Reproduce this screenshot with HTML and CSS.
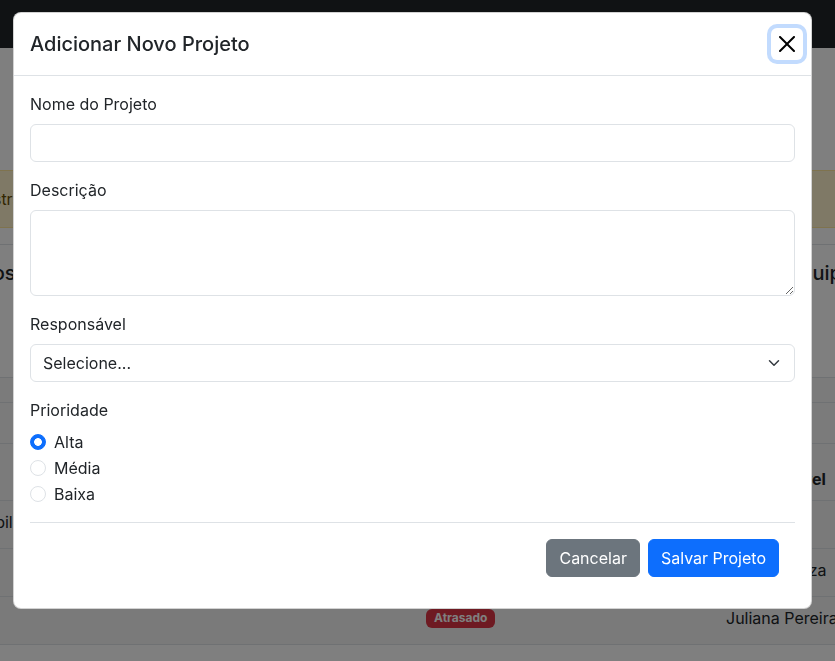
FILE: index.html
```
<!DOCTYPE html>
<html lang="pt-BR">
<head>
<meta charset="utf-8">
<title>Projetos</title>
<link rel="stylesheet" href="styles.css">
</head>
<body>
<header class="navbar"></header>
<main class="page">
  <div class="alert">Demonstração: dados fictícios para teste.</div>
  <div class="heads">
    <h5 class="head">Projetos</h5>
    <h5 class="head">Equipe</h5>
  </div>
  <div class="band band-a"></div>
  <div class="band band-b"></div>
  <div class="trow thead">
    <div>Nome</div><div>Status</div><div>Responsável</div>
  </div>
  <div class="trow">
    <div class="first">App Mobile</div><div><span class="badge ok">Em dia</span></div><div>Ana Lima</div>
  </div>
  <div class="trow">
    <div>ERP</div><div><span class="badge ok">Em dia</span></div><div>Carlos Souza</div>
  </div>
  <div class="trow last">
    <div>CRM</div><div><span class="badge late">Atrasado</span></div><div>Juliana Pereira</div>
  </div>
</main>

<div class="backdrop">
  <div class="modal">
    <div class="modal-header">
      <h5 class="modal-title">Adicionar Novo Projeto</h5>
      <button class="btn-close" type="button" aria-label="Fechar">
        <svg width="16" height="16" viewBox="0 0 16 16"><path fill="#000" d="M.293.293a1 1 0 0 1 1.414 0L8 6.586 14.293.293a1 1 0 1 1 1.414 1.414L9.414 8l6.293 6.293a1 1 0 0 1-1.414 1.414L8 9.414l-6.293 6.293a1 1 0 0 1-1.414-1.414L6.586 8 .293 1.707a1 1 0 0 1 0-1.414"/></svg>
      </button>
    </div>
    <div class="modal-body">
      <form class="form">
        <div class="field">
          <label class="label" for="nome">Nome do Projeto</label>
          <input class="control" id="nome" type="text">
        </div>
        <div class="field">
          <label class="label" for="desc">Descrição</label>
          <textarea class="control area" id="desc" rows="3"></textarea>
        </div>
        <div class="field">
          <label class="label">Responsável</label>
          <div class="control select">
            <span>Selecione...</span>
            <svg width="16" height="12" viewBox="0 0 16 16"><path fill="none" stroke="#343a40" stroke-linecap="round" stroke-linejoin="round" stroke-width="2" d="m2 5 6 6 6-6"/></svg>
          </div>
        </div>
        <div class="field">
          <label class="label">Prioridade</label>
          <div class="check"><input class="radio" type="radio" name="p" id="p1" checked><label for="p1">Alta</label></div>
          <div class="check"><input class="radio" type="radio" name="p" id="p2"><label for="p2">Média</label></div>
          <div class="check"><input class="radio" type="radio" name="p" id="p3"><label for="p3">Baixa</label></div>
        </div>
        <div class="modal-footer">
          <button class="btn btn-secondary" type="button">Cancelar</button>
          <button class="btn btn-primary" type="button">Salvar Projeto</button>
        </div>
      </form>
    </div>
  </div>
</div>
</body>
</html>
```
FILE: styles.css
```
* { box-sizing: border-box; }
html, body { margin: 0; }
body {
  font-family: Inter, "Noto Sans", sans-serif;
  font-size: 16px;
  line-height: 1.5;
  color: #212529;
  background: #fff;
  height: 661px;
  overflow: hidden;
}

/* background page */
.navbar { height: 48px; background: #212529; }
.page { margin: 0 -80px 0 -75px; padding-top: 122px; }
.alert {
  background: #fff3cd;
  border: 1px solid #ffe69c;
  color: #664d03;
  padding: 16px 16px 16px 13px;
  margin-bottom: 16px;
  white-space: nowrap;
}
.heads {
  display: grid;
  grid-template-columns: 851px 1fr;
  border-top: 1px solid #dee2e6;
  height: 133px;
}
.head {
  margin: 0;
  padding: 16px 12px;
  font-size: 20px;
  line-height: 24px;
  font-weight: 500;
  white-space: nowrap;
}
.band { border-top: 1px solid #dee2e6; background: #f6f6f6; }
.band-a { height: 25px; }
.band-b { height: 41px; }
.trow {
  display: grid;
  grid-template-columns: 489px 300px 1fr;
  align-items: start;
  height: 48px;
  padding-top: 9px;
  border-top: 1px solid #dee2e6;
  background: #f4f4f4;
}
.trow > div {
  display: flex;
  align-items: center;
  height: 24px;
  padding: 0 12px;
  white-space: nowrap;
}
.trow > .first { padding-left: 11px; }
.thead { height: 57px; padding-top: 23px; font-weight: 700; background: #f6f6f6; }
.last { height: 49px; border-bottom: 1px solid #dee2e6; }
.badge {
  display: inline-block;
  font-size: 12px;
  font-weight: 700;
  line-height: 1;
  padding: 3.5px 8px;
  border-radius: 6px;
  color: #fff;
}
.late { background: #dc3545; }
.ok { background: #198754; }

/* modal */
.backdrop {
  position: fixed;
  inset: 0;
  background: rgba(0, 0, 0, .5);
  padding: 12px 23px 0 13px;
}
.modal {
  background: #fff;
  border: 1px solid rgba(0, 0, 0, .175);
  border-radius: 8px;
}
.modal-header {
  display: flex;
  align-items: center;
  padding: 16px;
  border-bottom: 1px solid #dee2e6;
}
.modal-title {
  margin: 0;
  font-size: 20px;
  line-height: 30px;
  font-weight: 500;
}
.btn-close {
  display: flex;
  width: 32px;
  height: 32px;
  padding: 8px;
  margin: -8px -8px -8px auto;
  border: 0;
  border-radius: 6px;
  background: transparent;
  box-shadow: 0 0 0 4px rgba(13, 110, 253, .25);
}
.modal-body { padding: 16px 16px 15px; }
.form { margin: 0; }
.field { margin-bottom: 16px; }
.label { display: block; margin-bottom: 8px; }
.control {
  display: block;
  width: 100%;
  height: 38px;
  padding: 6px 12px;
  font: inherit;
  color: #212529;
  background: #fff;
  border: 1px solid #dee2e6;
  border-radius: 6px;
  outline: none;
}
.area { height: 86px; resize: vertical; }
.select {
  display: flex;
  align-items: center;
  justify-content: space-between;
}
.check {
  display: flex;
  align-items: center;
  gap: 8px;
  min-height: 24px;
  margin-bottom: 2px;
}
.radio {
  appearance: none;
  -webkit-appearance: none;
  width: 16px;
  height: 16px;
  margin: 0;
  border: 1px solid #dee2e6;
  border-radius: 50%;
  background: #fff;
}
.radio:checked {
  background: radial-gradient(circle, #fff 0 3.5px, #0d6efd 4.2px);
  border-color: #0d6efd;
}
.modal-footer {
  display: flex;
  justify-content: flex-end;
  padding: 12px;
  border-top: 1px solid #dee2e6;
}
.btn {
  margin: 4px;
  padding: 6px 12px;
  font: inherit;
  line-height: 24px;
  color: #fff;
  border: 1px solid transparent;
  border-radius: 6px;
}
.btn-secondary { background: #6c757d; border-color: #6c757d; }
.btn-primary { background: #0d6efd; border-color: #0d6efd; }
```
